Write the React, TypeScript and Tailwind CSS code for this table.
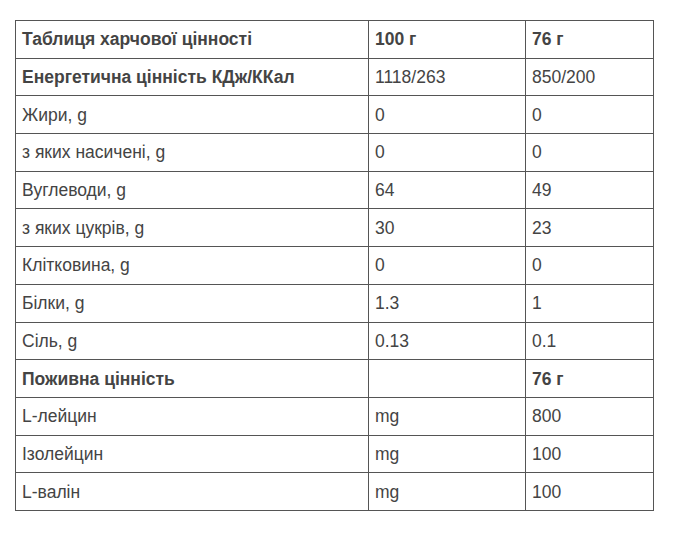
const rows: [string, string, string, boolean][] = [
  ["Таблиця харчової цінності", "100 г", "76 г", true],
  ["Енергетична цінність КДж/ККал", "1118/263", "850/200", false],
  ["Жири, g", "0", "0", false],
  ["з яких насичені, g", "0", "0", false],
  ["Вуглеводи, g", "64", "49", false],
  ["з яких цукрів, g", "30", "23", false],
  ["Клітковина, g", "0", "0", false],
  ["Білки, g", "1.3", "1", false],
  ["Сіль, g", "0.13", "0.1", false],
  ["Поживна цінність", "", "76 г", true],
  ["L-лейцин", "mg", "800", false],
  ["Ізолейцин", "mg", "100", false],
  ["L-валін", "mg", "100", false],
];

export default function App() {
  return (
    <div className="w-[676px] h-[533px] bg-white pt-[20px] pl-[15px] font-['Liberation_Sans',Arial,sans-serif] text-[17.5px] text-[#444]">
      <table className="border-collapse w-[639px] table-fixed">
        <colgroup>
          <col className="w-[353px]" />
          <col className="w-[157px]" />
          <col className="w-[128px]" />
        </colgroup>
        <tbody>
          {rows.map(([a, b, c, head], i) => (
            <tr key={i} className="h-[37.7px]">
              {/* first column header-ish rows are bold, second row label too */}
              <td className={`border border-[#555] px-[6px] py-0 leading-[22px] ${head || i === 1 ? "font-bold" : ""}`}>{a}</td>
              <td className={`border border-[#555] px-[6px] py-0 leading-[22px] ${head ? "font-bold" : ""}`}>{b}</td>
              <td className={`border border-[#555] px-[6px] py-0 leading-[22px] ${head ? "font-bold" : ""}`}>{c}</td>
            </tr>
          ))}
        </tbody>
      </table>
    </div>
  );
}
